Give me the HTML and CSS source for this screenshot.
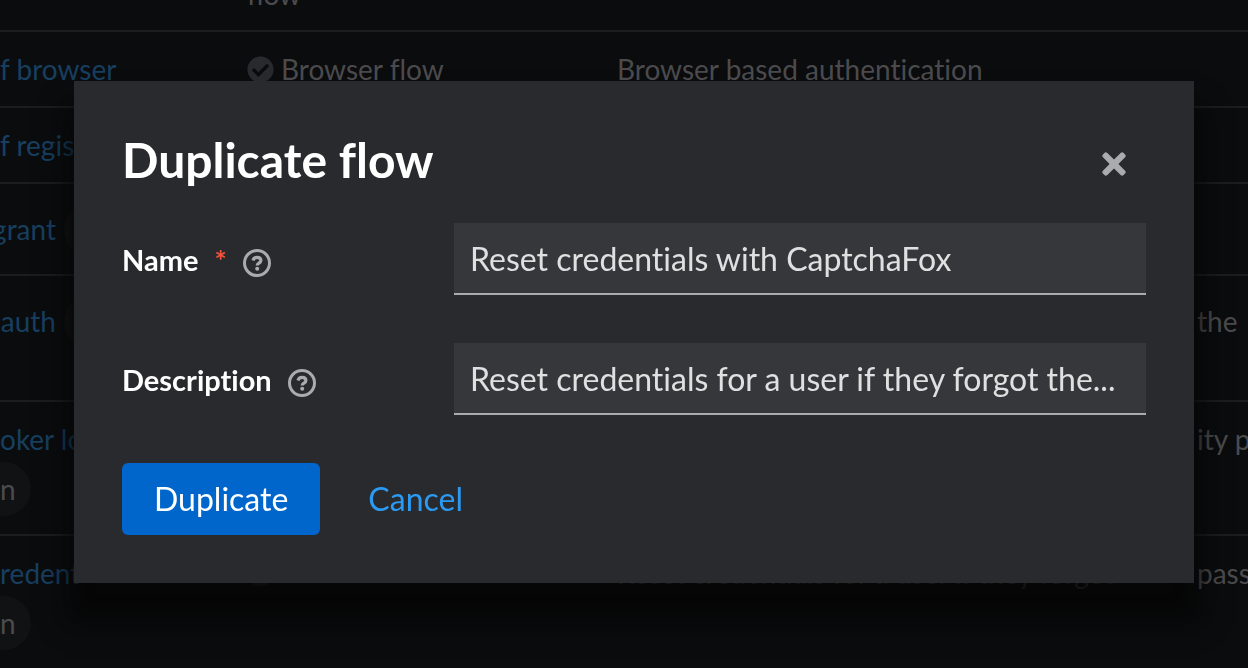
FILE: index.html
```html
<!DOCTYPE html>
<html lang="en">
<head>
    <meta charset="UTF-8">
    <meta name="viewport" content="width=device-width, initial-scale=1.0">
    <title>Duplicate flow</title>
    <link rel="stylesheet" href="styles.css">
</head>
<body>
    <table class="flows">
        <colgroup>
            <col class="col-name">
            <col class="col-used">
            <col class="col-desc">
            <col>
        </colgroup>
        <tbody>
            <tr class="row-cut">
                <td></td>
                <td>flow</td>
                <td></td>
                <td></td>
            </tr>
            <tr class="row-short">
                <td><a href="#">f browser</a></td>
                <td>
                    <span class="used">
                        <svg class="check" viewBox="0 0 512 512" aria-hidden="true"><path fill="currentColor" d="M504 256c0 137-111 248-248 248S8 393 8 256 119 8 256 8s248 111 248 248zM227.300 387.300l184-184c6.200-6.200 6.200-16.400 0-22.600l-22.600-22.600c-6.200-6.200-16.400-6.200-22.600 0L216 308.100l-70.100-70.100c-6.200-6.200-16.400-6.200-22.600 0l-22.600 22.600c-6.200 6.200-6.200 16.400 0 22.600l104 104c6.200 6.300 16.400 6.300 22.600.1z"/></svg>
                        Browser flow
                    </span>
                </td>
                <td>Browser based authentication</td>
                <td></td>
            </tr>
            <tr class="row-short">
                <td><a href="#">f regis</a></td>
                <td></td>
                <td></td>
                <td></td>
            </tr>
            <tr class="row-label">
                <td><a href="#">grant</a><span class="label"></span></td>
                <td></td>
                <td></td>
                <td></td>
            </tr>
            <tr class="row-tall">
                <td><a href="#">auth</a><span class="label"></span></td>
                <td></td>
                <td></td>
                <td>the</td>
            </tr>
            <tr class="row-wrap">
                <td><a href="#">oker lo</a><span class="label label-cut">n</span></td>
                <td></td>
                <td></td>
                <td>ity pr</td>
            </tr>
            <tr class="row-wrap">
                <td><a href="#">redent</a><span class="label label-cut">n</span></td>
                <td>
                    <span class="used">
                        <svg class="check" viewBox="0 0 512 512" aria-hidden="true"><path fill="currentColor" d="M504 256c0 137-111 248-248 248S8 393 8 256 119 8 256 8s248 111 248 248zM227.300 387.300l184-184c6.200-6.200 6.200-16.400 0-22.600l-22.600-22.600c-6.200-6.200-16.400-6.200-22.600 0L216 308.100l-70.100-70.100c-6.200-6.200-16.400-6.200-22.600 0l-22.600 22.600c-6.200 6.200-6.200 16.400 0 22.600l104 104c6.200 6.300 16.400 6.300 22.600.1z"/></svg>
                    </span>
                </td>
                <td>Reset credentials for a user if they forgot</td>
                <td>pass</td>
            </tr>
        </tbody>
    </table>

    <div class="backdrop">
        <div class="modal" role="dialog" aria-modal="true" aria-labelledby="modal-title">
            <header class="modal-header">
                <h1 id="modal-title">Duplicate flow</h1>
                <button class="close" type="button" aria-label="Close">
                    <svg viewBox="0 0 352 512" aria-hidden="true"><path fill="currentColor" d="M242.720 256l100.070-100.070c12.280-12.280 12.280-32.190 0-44.480l-22.240-22.240c-12.280-12.280-32.190-12.280-44.480 0L176 189.280 75.930 89.210c-12.280-12.280-32.190-12.280-44.480 0L9.210 111.450c-12.280 12.280-12.280 32.190 0 44.480L109.280 256 9.210 356.070c-12.280 12.280-12.280 32.190 0 44.480l22.240 22.240c12.280 12.280 32.200 12.280 44.480 0L176 322.720l100.070 100.070c12.280 12.280 32.200 12.280 44.480 0l22.240-22.240c12.280-12.280 12.280-32.190 0-44.480L242.720 256z"/></svg>
                </button>
            </header>
            <form class="form">
                <div class="form-group">
                    <div class="form-label">
                        <label for="name">Name</label>
                        <span class="required" aria-hidden="true">*</span>
                        <button class="help" type="button" aria-label="Help for name">
                            <svg viewBox="0 0 28 28" aria-hidden="true">
                                <circle cx="14" cy="14" r="12.500" fill="none" stroke="currentColor" stroke-width="3"/>
                                <path d="M10 11.500C10.600 9.300 12 8.400 14 8.400c2.300 0 3.900 1.200 3.900 3.100 0 2.700-3.700 2.500-3.700 5" fill="none" stroke="currentColor" stroke-width="3.200"/>
                                <circle cx="14.200" cy="19.700" r="2" fill="currentColor"/>
                            </svg>
                        </button>
                    </div>
                    <input id="name" type="text" value="Reset credentials with CaptchaFox" required>
                </div>
                <div class="form-group">
                    <div class="form-label">
                        <label for="description">Description</label>
                        <button class="help" type="button" aria-label="Help for description">
                            <svg viewBox="0 0 28 28" aria-hidden="true">
                                <circle cx="14" cy="14" r="12.500" fill="none" stroke="currentColor" stroke-width="3"/>
                                <path d="M10 11.500C10.600 9.300 12 8.400 14 8.400c2.300 0 3.900 1.200 3.900 3.100 0 2.700-3.700 2.500-3.700 5" fill="none" stroke="currentColor" stroke-width="3.200"/>
                                <circle cx="14.200" cy="19.700" r="2" fill="currentColor"/>
                            </svg>
                        </button>
                    </div>
                    <input id="description" type="text" value="Reset credentials for a user if they forgot the...">
                </div>
                <div class="actions">
                    <button class="btn btn-primary" type="submit">Duplicate</button>
                    <button class="btn btn-link" type="button">Cancel</button>
                </div>
            </form>
        </div>
    </div>
</body>
</html>
```
FILE: styles.css
```css
* {
    box-sizing: border-box;
}

body {
    margin: 0;
    height: 100vh;
    overflow: hidden;
    background: #0b0c0e;
    color: #4b4b4d;
    font-family: Lato, "Liberation Sans", sans-serif;
    font-size: 28px;
    font-variant-ligatures: none;
    line-height: 42px;
}

button,
input {
    font: inherit;
    font-variant-ligatures: none;
    border: none;
    border-radius: 0;
    margin: 0;
}

/* flow list behind the dialog */
.flows {
    width: 100%;
    margin-top: -20px;
    table-layout: fixed;
    border-collapse: separate;
    border-spacing: 0;
}

.flows td {
    padding: 16px 0;
    border-bottom: 2px solid #1c1d1f;
    vertical-align: top;
    white-space: nowrap;
}

.flows td:last-child {
    overflow: hidden;
}

.flows a {
    color: #173f60;
    text-decoration: none;
}

.col-name { width: 247px; }
.col-used { width: 370px; }
.col-desc { width: 580px; }

.flows .row-cut td {
    height: 52px;
    padding: 0;
    line-height: 28px;
}

.row-short td { height: 76px; }
.row-label td { height: 92px; }
.row-tall td { height: 126px; }
.row-wrap td { height: 134px; }

/* long names run out to the left, next to their label */
.row-label a,
.row-tall a {
    display: inline-flex;
    justify-content: flex-end;
    width: 56px;
    margin-right: 8px;
}

.flows .row-label td,
.flows .row-tall td {
    padding-top: 24px;
}

.used {
    display: flex;
    align-items: center;
    gap: 7px;
    height: 42px;
}

.check {
    width: 27px;
    height: 27px;
    color: #292a2d;
}

.label {
    display: inline-block;
    width: 120px;
    height: 54px;
    border-radius: 27px;
    background: #111214;
    line-height: 54px;
    margin-top: -6px;
    vertical-align: middle;
}

.label-cut {
    display: block;
    width: 31px;
    margin-top: 2px;
    border-radius: 0 27px 27px 0;
}

/* dialog */
.backdrop {
    position: fixed;
    inset: 0;
    padding: 81px 54px 0 74px;
}

.modal {
    padding: 48px;
    background: #292a2d;
    color: #fff;
    box-shadow: 0 32px 24px 8px rgba(5, 5, 5, 0.8);
}

.modal-header {
    display: flex;
    justify-content: space-between;
    align-items: center;
    margin-bottom: 32px;
}

.modal-header h1 {
    margin: 0;
    font-size: 48px;
    font-weight: 700;
    line-height: 62px;
}

.close {
    display: flex;
    padding: 8px 20px 0;
    background: none;
    color: #aaabac;
}

.close svg {
    width: 24px;
    height: 34px;
}

.form {
    display: grid;
    gap: 48px;
}

.form-group {
    display: grid;
    grid-template-columns: 300px 1fr;
    gap: 32px;
}

.form-label {
    display: flex;
    align-items: center;
    gap: 16px;
    height: 74px;
    margin-bottom: -2px;
    font-size: 29px;
    font-weight: 700;
}

.required {
    color: #f4523b;
}

.help {
    display: flex;
    padding: 6px 0 0;
    background: none;
    color: #aaabac;
}

.help svg {
    width: 28px;
    height: 28px;
}

.form-group input {
    width: 100%;
    height: 72px;
    padding: 0 16px;
    border-bottom: 2px solid #aaabac;
    background: #36373a;
    color: #e0e0e0;
    font-size: 32px;
    text-overflow: ellipsis;
}

.actions {
    display: flex;
    gap: 16px;
}

.btn {
    padding: 12px 32px;
    border-radius: 6px;
    font-size: 32px;
    line-height: 48px;
}

.btn-primary {
    background: #0066cc;
    color: #fff;
}

.btn-link {
    background: none;
    color: #2b9af3;
}
```
